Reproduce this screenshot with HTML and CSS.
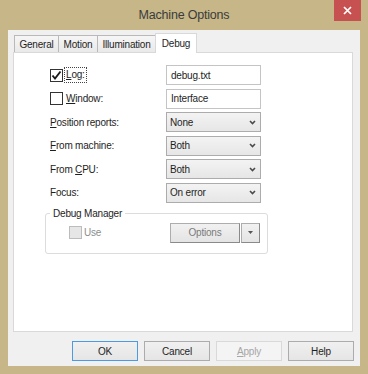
FILE: index.html
```html
<!DOCTYPE html>
<html lang="en">
  <head>
    <meta charset="UTF-8" />
    <meta name="viewport" content="width=device-width, initial-scale=1.0" />
    <title>Machine Options</title>
    <link rel="stylesheet" href="styles.css">
  </head>
  <body>
    <div class="window">
      <div class="titlebar">
        <span class="title">Machine Options</span>
        <span class="close">
          <svg width="9" height="9" viewBox="0 0 9 9"><path d="M1 1L8 8M8 1L1 8" stroke="#fff" stroke-width="1.7" /></svg>
        </span>
      </div>

      <div class="client">
        <div class="tabs">
          <div class="tab tab-general">General</div>
          <div class="tab tab-motion">Motion</div>
          <div class="tab tab-illum">Illumination</div>
          <div class="tab tab-debug active">Debug</div>
        </div>

        <div class="panel">
          <div class="form">
            <div class="label">
              <span class="checkbox">
                <svg width="11" height="11" viewBox="0 0 11 11"><path d="M1.5 5.5L4 8.5L9.5 1.5" fill="none" stroke="#1a1a1a" stroke-width="1.9" /></svg>
              </span>
              <span class="focus"><u>L</u>og:</span>
            </div>
            <div class="textbox">debug.txt</div>

            <div class="label">
              <span class="checkbox"></span>
              <span class="check-text"><u>W</u>indow:</span>
            </div>
            <div class="textbox">Interface</div>

            <div class="label"><span><u>P</u>osition reports:</span></div>
            <div class="select">None <svg width="7" height="5" viewBox="0 0 7 5"><path d="M1 1L3.5 3.5L6 1" fill="none" stroke="#4a4a4a" stroke-width="1.6" /></svg></div>

            <div class="label"><span><u>F</u>rom machine:</span></div>
            <div class="select">Both <svg width="7" height="5" viewBox="0 0 7 5"><path d="M1 1L3.5 3.5L6 1" fill="none" stroke="#4a4a4a" stroke-width="1.6" /></svg></div>

            <div class="label"><span>From <u>C</u>PU:</span></div>
            <div class="select">Both <svg width="7" height="5" viewBox="0 0 7 5"><path d="M1 1L3.5 3.5L6 1" fill="none" stroke="#4a4a4a" stroke-width="1.6" /></svg></div>

            <div class="label"><span>Focus:</span></div>
            <div class="select">On error <svg width="7" height="5" viewBox="0 0 7 5"><path d="M1 1L3.5 3.5L6 1" fill="none" stroke="#4a4a4a" stroke-width="1.6" /></svg></div>
          </div>

          <fieldset class="group">
            <legend>Debug Manager</legend>
            <div class="group-row">
              <div class="use">
                <span class="checkbox disabled"></span>
                <span>Use</span>
              </div>
              <div class="split">
                <span class="split-main">Options</span>
                <span class="split-arrow">
                  <svg width="5" height="3" viewBox="0 0 5 3"><path d="M0 0H5L2.5 3Z" fill="#555" /></svg>
                </span>
              </div>
            </div>
          </fieldset>
        </div>

        <div class="buttons">
          <div class="btn default">OK</div>
          <div class="btn">Cancel</div>
          <div class="btn disabled"><span><u>A</u>pply</span></div>
          <div class="btn">Help</div>
        </div>
      </div>
    </div>
  </body>
</html>
```

FILE: styles.css
```css
body {
  margin: 0;
  background-color: #c6b688;
  font-family: "Liberation Sans", Arial, sans-serif;
  font-size: 10px;
  letter-spacing: -0.2px;
  color: #1e1e1e;
}

.window {
  width: 368px;
  height: 374px;
  box-sizing: border-box;
  padding: 0 8px 8px;
  display: flex;
  flex-direction: column;
}

.titlebar {
  height: 30px;
  flex-shrink: 0;
  position: relative;
  display: flex;
  align-items: center;
  justify-content: center;
}

.title {
  font-size: 12.5px;
  letter-spacing: -0.2px;
  color: #3b3b3b;
  margin-top: -1px;
}

.close {
  position: absolute;
  top: 0;
  right: -1px;
  width: 27px;
  height: 21px;
  background-color: #c75050;
  display: flex;
  align-items: center;
  justify-content: center;
}

.client {
  flex: 1;
  background-color: #f0f0f0;
  padding: 3px 7px 0 5px;
  display: flex;
  flex-direction: column;
}

/* tab strip */
.tabs {
  display: flex;
  align-items: flex-end;
  height: 19px;
  padding-left: 1px;
  position: relative;
  z-index: 1;
}

.tab {
  height: 17px;
  box-sizing: border-box;
  border: 1px solid #b9b9b9;
  border-bottom: none;
  background: linear-gradient(#f6f6f6, #e9e9e9);
  display: flex;
  align-items: center;
  justify-content: center;
  margin-left: -1px;
}

.tab:first-child {
  margin-left: 0;
}

.tab-general { width: 45px; }
.tab-motion { width: 40px; }
.tab-illum { width: 59px; }
.tab-debug { width: 42px; }

.tab.active {
  height: 20px;
  margin-bottom: -1px;
  background: #fff;
  border-color: #d9d9d9;
  padding-bottom: 1px;
}

.panel {
  height: 280px;
  box-sizing: border-box;
  background-color: #fff;
  border: 1px solid #d9d9d9;
  padding: 12px 0 0 31px;
}

.form {
  display: grid;
  grid-template-columns: 116px 95px;
  grid-auto-rows: 20px;
  row-gap: 3.6px;
  margin-left: 5px;
}

.label {
  display: flex;
  align-items: center;
}

.checkbox {
  width: 13px;
  height: 13px;
  box-sizing: border-box;
  border: 1px solid #333;
  background-color: #fff;
  margin-right: 2px;
  display: flex;
  align-items: center;
  justify-content: center;
  flex-shrink: 0;
}

.focus {
  outline: 1px dotted #444;
  outline-offset: 0;
  padding: 1px 1px 2px;
}

.check-text {
  padding-left: 1px;
}

.textbox {
  box-sizing: border-box;
  border: 1px solid #c4c4c4;
  background-color: #fff;
  display: flex;
  align-items: center;
  padding-left: 4px;
}

.select {
  box-sizing: border-box;
  border: 1px solid #acacac;
  background: linear-gradient(#f3f3f3, #e6e6e6);
  display: flex;
  align-items: center;
  justify-content: space-between;
  padding: 0 4px 0 3px;
}

/* Debug Manager group */
.group {
  width: 223px;
  box-sizing: border-box;
  margin: 4px 0 0 0;
  padding: 3px 7px 10px 0;
  border: 1px solid #dcdcdc;
  border-radius: 3px;
}

.group legend {
  padding: 0 3px;
  margin-left: 4px;
  line-height: 13px;
}

.group-row {
  display: flex;
  align-items: center;
  padding-left: 23px;
}

.use {
  display: flex;
  align-items: center;
  color: #8d8d8d;
}

.checkbox.disabled {
  background-color: #e6e6e6;
  border-color: #bcbcbc;
}

.split {
  margin-left: auto;
  display: flex;
  gap: 1px;
}

.split-main,
.split-arrow {
  height: 20px;
  box-sizing: border-box;
  border: 1px solid #adadad;
  border-right-color: #8a8a8a;
  border-bottom-color: #8a8a8a;
  background: linear-gradient(#f1f1f1, #e4e4e4);
  display: flex;
  align-items: center;
  justify-content: center;
}

.split-main {
  width: 70px;
  color: #7a7a7a;
}

.split-arrow {
  width: 19px;
}

/* dialog buttons */
.buttons {
  display: flex;
  justify-content: flex-end;
  gap: 6px;
  margin-top: 9px;
  margin-right: -1px;
}

.btn {
  width: 66px;
  height: 20px;
  box-sizing: border-box;
  border: 1px solid #acacac;
  background: linear-gradient(#f0f0f0, #e5e5e5);
  display: flex;
  align-items: center;
  justify-content: center;
}

.btn.default {
  border-color: #4a9ae4;
}

.btn.disabled {
  border-color: #d9d9d9;
  background: #f4f4f4;
  color: #a6a6a6;
}
```
